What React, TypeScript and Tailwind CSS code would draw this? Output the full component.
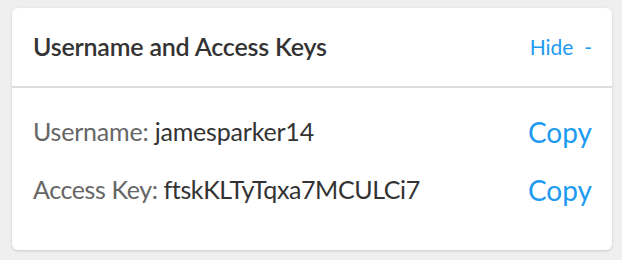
export default function App() {
  return (
    <div className="w-[622px] h-[260px] bg-[#efefef] pt-2 pl-3" style={{ fontFamily: "Lato, 'Noto Sans', sans-serif" }}>
      <div className="w-[600px] h-[242px] bg-white rounded-md shadow-[0_1px_3px_rgba(0,0,0,0.15)] flex flex-col">
        <div className="h-20 flex items-center justify-between pl-[21px] pr-5 border-b-2 border-[#dddddd]">
          <h2 className="text-[25px] font-semibold text-[#333333] tracking-[-0.2px]">Username and Access Keys</h2>
          <button className="text-[21px] text-[#1e9bf0]">Hide&nbsp; -</button>
        </div>
        <div className="flex flex-col pl-[21px] pr-5 pt-[26px] gap-[22px]">
          <div className="flex items-center justify-between h-9">
            <p className="text-[25px] text-[#333333] tracking-[-0.2px]">
              <span className="text-[#666666]">Username:</span> jamesparker14
            </p>
            <button className="text-[28px] text-[#1e9bf0]">Copy</button>
          </div>
          <div className="flex items-center justify-between h-9">
            <p className="text-[25px] text-[#333333] tracking-[-0.4px]">
              <span className="text-[#666666]">Access Key:</span> ftskKLTyTqxa7MCULCi7
            </p>
            <button className="text-[28px] text-[#1e9bf0]">Copy</button>
          </div>
        </div>
      </div>
    </div>
  );
}
